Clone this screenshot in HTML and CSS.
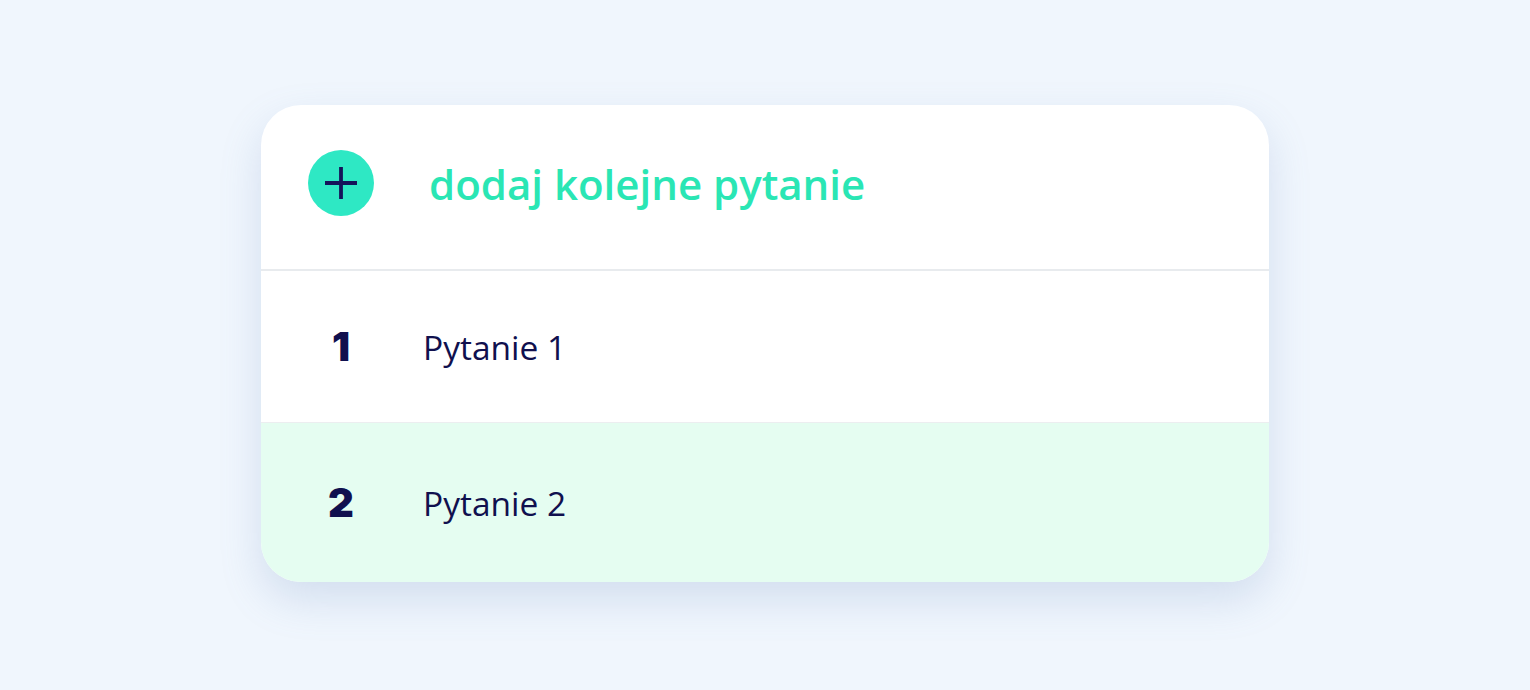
FILE: index.html
```html
<!doctype html>
<html>
<head>
  <meta charset="utf-8" />
  <meta name="viewport" content="width=device-width, initial-scale=1.0" />
  <title>Pytania</title>
  <link rel="stylesheet" href="styles.css">
</head>
<body>
  <div class="card">
    <div class="row add-row">
      <div class="cell">
        <span class="add-btn">
          <svg width="34" height="34" viewBox="0 0 34 34">
            <path d="M17 1v32M1 17h32" stroke="#14145a" stroke-width="3.8" fill="none"/>
          </svg>
        </span>
      </div>
      <div class="add-label">dodaj kolejne pytanie</div>
    </div>
    <div class="row question">
      <div class="cell num">1</div>
      <div class="title">Pytanie 1</div>
    </div>
    <div class="row question active">
      <div class="cell num">2</div>
      <div class="title">Pytanie 2</div>
    </div>
  </div>
</body>
</html>
```

FILE: styles.css
```css
* {
  box-sizing: border-box;
}
body {
  margin: 0;
  padding: 105px 0 0;
  min-height: 100vh;
  background: #f0f6fd;
  font-family: 'Open Sans', 'Noto Sans', sans-serif;
}
.card {
  width: 1008px;
  margin: 0 auto;
  background: #fff;
  border-radius: 40px;
  overflow: hidden;
  box-shadow: 0 18px 40px rgba(110, 140, 190, 0.22);
}
.row {
  display: grid;
  grid-template-columns: 160px 1fr;
  align-items: center;
}
.cell {
  display: flex;
  justify-content: center;
}
.add-row {
  height: 166px;
  padding-bottom: 8px;
  border-bottom: 2px solid #e8ebee;
}
.add-btn {
  width: 66px;
  height: 66px;
  border-radius: 50%;
  background: #2ee8c4;
  display: flex;
  align-items: center;
  justify-content: center;
}
.add-label {
  padding-left: 8px;
  color: #2ae6b4;
  font-size: 42px;
  font-weight: 600;
}
.question {
  height: 151px;
  color: #10104e;
}
.question + .question {
  height: 160px;
  border-top: 1px solid #eceef0;
}
.question.active {
  background: #e5fdf1;
}
.num {
  font-family: Inter, Lato, sans-serif;
  font-weight: 900;
  font-size: 40px;
}
.title {
  padding-left: 2px;
  font-size: 33.5px;
}
```
